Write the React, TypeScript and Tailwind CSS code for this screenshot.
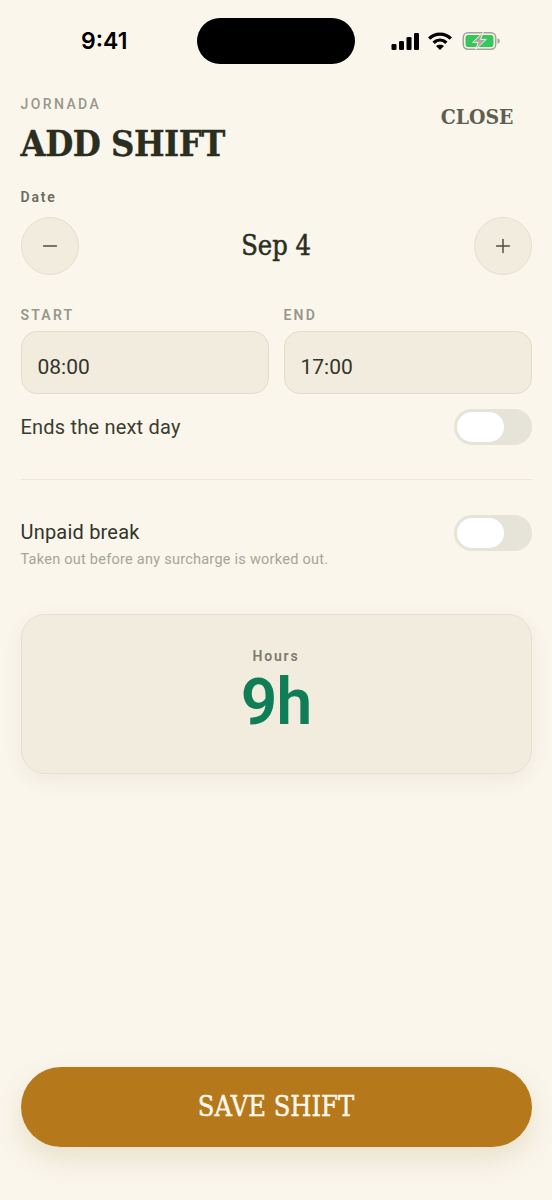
import { Minus, Plus } from 'lucide-react';

const slab = "font-['DejaVu_Serif_Condensed','DejaVu_Serif',serif]";
const sans = "font-['Roboto','Liberation_Sans',sans-serif]";

function StatusIcons() {
  return (
    <div className="flex items-center">
      <svg width="29" height="17" viewBox="0 0 28 17" fill="#000">
        <rect x="0" y="11" width="5" height="6" rx="1.2" />
        <rect x="7.5" y="8" width="5" height="9" rx="1.2" />
        <rect x="15" y="4" width="5" height="13" rx="1.2" />
        <rect x="22.5" y="0" width="5" height="17" rx="1.2" />
      </svg>
      <svg className="ml-[8px]" width="24" height="18" viewBox="0 0 24 18" fill="none" stroke="#000" strokeWidth="3.3">
        <path d="M1.2 6.6C7.2 0.6 16.8 0.6 22.8 6.6" />
        <path d="M5.6 10.8C9.4 7.2 14.6 7.2 18.4 10.8" />
        <path d="M12 18L8 13.9C10.2 12.2 13.8 12.2 16 13.9Z" fill="#000" stroke="none" />
      </svg>
      <svg className="ml-[10px]" width="39" height="18" viewBox="0 0 38 18" fill="none">
        <rect x="0.8" y="0.8" width="32.4" height="16.4" rx="4.6" stroke="#a3a39b" strokeWidth="1.5" />
        <rect x="3" y="3" width="28" height="12" rx="2.8" fill="#34c759" />
        <path d="M35 6.2C36.6 6.8 37.4 7.8 37.4 9C37.4 10.2 36.6 11.2 35 11.8Z" fill="#a3a39b" />
        <path d="M20.8 0.4L10 10.4H15.8L13 17.6L23.8 7.4H18Z" fill="#a8a89f" stroke="#f4f1e6" strokeWidth="1" />
      </svg>
    </div>
  );
}

function StepButton({ children }: { children: React.ReactNode }) {
  return (
    <button className="w-[58px] h-[58px] rounded-full bg-[#f2ecdf] border border-[#e5dfd0] flex items-center justify-center text-[#4b4d40]">
      {children}
    </button>
  );
}

function TimeField({ label, value }: { label: string; value: string }) {
  return (
    <div className="flex-1">
      <div className="text-[14px] leading-[18px] font-semibold tracking-[2.2px] text-[#97978a]">{label}</div>
      <div className="mt-[7px] h-[63px] rounded-[16px] bg-[#f2ecdf] border border-[#e3dccb] pl-[16px] pt-[21px]">
        <span className="text-[21px] leading-[28px] text-[#33352a]">{value}</span>
      </div>
    </div>
  );
}

function Toggle() {
  return (
    <div className="w-[78px] h-[36px] rounded-full bg-[#e6e3d8] p-[3px]">
      <div className="w-[47px] h-[30px] rounded-full bg-white" />
    </div>
  );
}

export default function App() {
  return (
    <div className={`${sans} w-[552px] h-[1200px] bg-[#faf6ec] flex flex-col overflow-hidden`}>
      <div className="h-[82px] pt-[18px] pl-[81px] flex items-start">
        <span className="w-[60px] mt-[8px] font-['Inter',sans-serif] text-[23px] leading-[30px] font-semibold text-black">9:41</span>
        <div className="w-[158px] h-[46px] rounded-full bg-black ml-[56px]" />
        <div className="mt-[14px] ml-[36px]">
          <StatusIcons />
        </div>
      </div>

      <div className="px-[20.5px] flex-1 flex flex-col">
        <div className="flex items-start justify-between">
          <div>
            <div className="text-[14px] leading-[18px] mt-[13px] tracking-[2.4px] font-medium text-[#97978a]">JORNADA</div>
            <h1 className={`${slab} text-[36px] leading-[44px] mt-[8px] font-bold tracking-[-0.5px] text-[#2a2e1f] [-webkit-text-stroke:0.3px_#2a2e1f]`}>ADD SHIFT</h1>
          </div>
          <button className={`${slab} mt-[23px] mr-[18px] text-[21px] leading-[24px] font-bold text-[#5d6051]`}>CLOSE</button>
        </div>

        <div className="text-[14px] leading-[18px] mt-[23px] tracking-[1.8px] font-semibold text-[#6a6b5e]">Date</div>
        <div className="mt-[11px] flex items-center justify-between">
          <StepButton>
            <Minus size={22} strokeWidth={1.6} />
          </StepButton>
          <span className={`${slab} text-[27px] leading-[34px] text-[#2a2e1f] [-webkit-text-stroke:0.5px_#2a2e1f]`}>Sep 4</span>
          <StepButton>
            <Plus size={22} strokeWidth={1.6} />
          </StepButton>
        </div>

        <div className="mt-[31px] flex gap-[15px]">
          <TimeField label="START" value="08:00" />
          <TimeField label="END" value="17:00" />
        </div>

        <div className="mt-[15px] flex items-center justify-between">
          <span className="text-[20px] leading-[28px] tracking-[0.2px] text-[#3a3c30]">Ends the next day</span>
          <Toggle />
        </div>

        <div className="mt-[34px] h-px bg-[#ece6d8]" />

        <div className="mt-[35px] flex items-start justify-between">
          <div>
            <div className="text-[20px] leading-[28px] mt-[3px] tracking-[0.2px] text-[#33352a]">Unpaid break</div>
            <div className="text-[14.5px] leading-[20px] mt-[4px] tracking-[0.25px] text-[#a5a597]">Taken out before any surcharge is worked out.</div>
          </div>
          <Toggle />
        </div>

        <div className="mt-[44px] h-[160px] rounded-[24px] bg-[#f2ecdf] border border-[#e5e0d2] shadow-[0_6px_20px_rgba(80,70,40,0.07)] flex flex-col items-center pt-[32px]">
          <div className="text-[14px] leading-[18px] tracking-[1.8px] font-semibold text-[#7b7a6c]">Hours</div>
          <div className="text-[64px] leading-[64px] mt-[6px] font-semibold tracking-[-1px] text-[#0f7e57]">9h</div>
        </div>

        <button
          className={`${slab} mt-auto mb-[53px] h-[80px] rounded-full bg-[#b5781a] text-[27px] text-[#fdf8ee] [-webkit-text-stroke:0.4px_#fdf8ee] shadow-[0_12px_28px_rgba(150,110,30,0.16)]`}
        >
          SAVE SHIFT
        </button>
      </div>
    </div>
  );
}
